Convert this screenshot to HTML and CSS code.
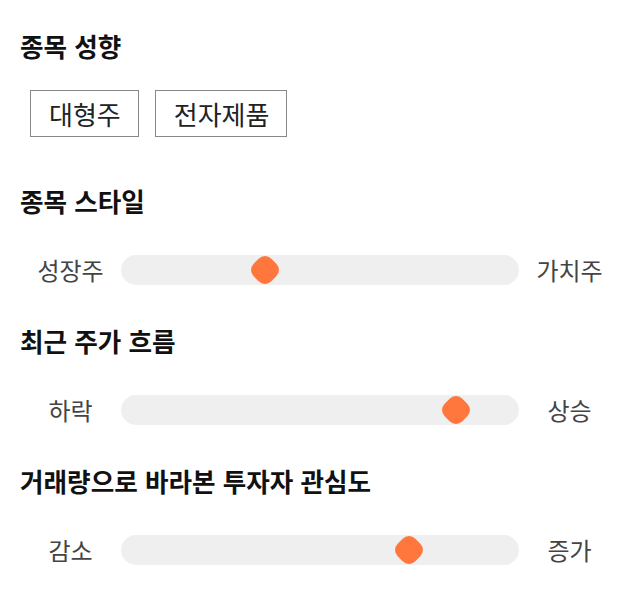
FILE: index.html
```html
<!DOCTYPE html>
<html lang="ko">
<head>
<meta charset="utf-8">
<link rel="stylesheet" href="styles.css">
</head>
<body>
<main class="page">
  <section class="section section-tags">
    <h2 class="title">종목 성향</h2>
    <div class="tags">
      <span class="tag">대형주</span>
      <span class="tag">전자제품</span>
    </div>
  </section>
  <section class="section">
    <h2 class="title">종목 스타일</h2>
    <div class="slider-row">
      <span class="label">성장주</span>
      <div class="track"><span class="thumb" style="left: 36.3%"></span></div>
      <span class="label">가치주</span>
    </div>
  </section>
  <section class="section">
    <h2 class="title">최근 주가 흐름</h2>
    <div class="slider-row">
      <span class="label">하락</span>
      <div class="track"><span class="thumb" style="left: 84.1%"></span></div>
      <span class="label">상승</span>
    </div>
  </section>
  <section class="section">
    <h2 class="title">거래량으로 바라본 투자자 관심도</h2>
    <div class="slider-row">
      <span class="label">감소</span>
      <div class="track"><span class="thumb" style="left: 72.3%"></span></div>
      <span class="label">증가</span>
    </div>
  </section>
</main>
</body>
</html>
```

FILE: styles.css
```css
* { box-sizing: border-box; }
html, body { margin: 0; padding: 0; background: #fff; }
body {
  font-family: "Noto Sans CJK KR", "Noto Sans", sans-serif;
  color: #111;
}
.page {
  padding: 30px 20px 0 20px;
  display: flex;
  flex-direction: column;
}
.section { display: flex; flex-direction: column; padding-bottom: 40px; }
.section-tags { padding-bottom: 48px; }
.title {
  margin: 0;
  font-size: 25.6px;
  line-height: 32px;
  font-weight: 700;
  color: #111;
}
.tags {
  display: flex;
  gap: 16px;
  margin-top: 28px;
  padding-left: 10px;
}
.tag {
  display: inline-flex;
  align-items: center;
  justify-content: center;
  height: 47px;
  padding: 0 17px 0 18px;
  border: 1px solid #888;
  font-size: 26px;
  color: #222;
}
.slider-row {
  display: grid;
  grid-template-columns: 101px 1fr 101px;
  align-items: center;
  margin-top: 38px;
  height: 30px;
}
.label {
  text-align: center;
  font-size: 24px;
  color: #444;
  line-height: 30px;
}
.track {
  position: relative;
  height: 30px;
  border-radius: 15px;
  background: #efefef;
}
.thumb {
  position: absolute;
  top: 50%;
  width: 25px;
  height: 25px;
  background: #ff773d;
  border-radius: 9px;
  transform: translate(-50%, -50%) rotate(45deg);
}
```
